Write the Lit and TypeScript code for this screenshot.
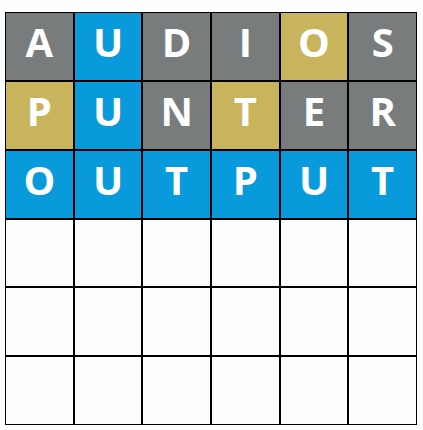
import { LitElement, html, css } from "lit";
import { customElement, property } from "lit/decorators.js";
import { classMap } from "lit/directives/class-map.js";

type Mark = "absent" | "present" | "correct" | "empty";

interface Guess {
  word: string;
  // one character per letter: "-" absent, "?" present, "+" correct
  marks: string;
}

const SIZE = 6;

const GUESSES: Guess[] = [
  { word: "AUDIOS", marks: "-+--?-" },
  { word: "PUNTER", marks: "?+-?--" },
  { word: "OUTPUT", marks: "++++++" },
];

const MARKS: Record<string, Mark> = {
  "-": "absent",
  "?": "present",
  "+": "correct",
};

@customElement("letter-tile")
export class LetterTile extends LitElement {
  @property() letter = "";
  @property() mark: Mark = "empty";

  static styles = css`
    :host {
      display: grid;
      min-width: 0;
      min-height: 0;
    }
    .tile {
      display: flex;
      align-items: center;
      justify-content: center;
      box-sizing: border-box;
      border: 1px solid #000;
      padding-bottom: 8px;
      background: #fefefe;
      color: #fff;
      font: 700 40px/48px "Open Sans", "Noto Sans", sans-serif;
    }
    .absent {
      background: #787c7d;
    }
    .present {
      background: #c8b45c;
    }
    .correct {
      background: #089adb;
    }
  `;

  render() {
    return html`<div class=${classMap({ tile: true, [this.mark]: true })}>${this.letter}</div>`;
  }
}

@customElement("app-root")
export class AppRoot extends LitElement {
  static styles = css`
    :host {
      display: block;
      padding: 12px 6px 5px 5px;
      background: #fefefe;
    }
    .board {
      display: grid;
      grid-template-columns: repeat(6, minmax(0, 1fr));
      grid-template-rows: repeat(6, minmax(0, 1fr));
      aspect-ratio: 412 / 413;
    }
  `;

  render() {
    const tiles = Array.from({ length: SIZE * SIZE }, (_, i) => {
      const guess = GUESSES[Math.floor(i / SIZE)];
      const column = i % SIZE;
      return {
        letter: guess ? guess.word[column] : "",
        mark: guess ? MARKS[guess.marks[column]] : "empty",
      };
    });
    return html`
      <main class="board">
        ${tiles.map((t) => html`<letter-tile .letter=${t.letter} .mark=${t.mark}></letter-tile>`)}
      </main>
    `;
  }
}
